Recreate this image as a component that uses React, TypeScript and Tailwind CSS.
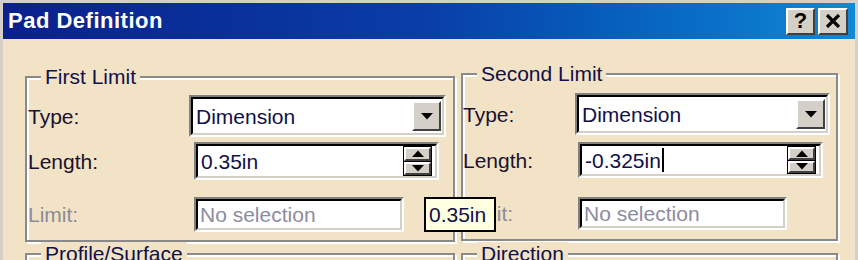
import type { ReactNode } from 'react'

// classic 3D borders, drawn at 2x
const sunkenOuter = 'border-2 border-t-[#808080] border-l-[#808080] border-b-white border-r-white'
const sunkenInner = 'border-2 border-t-black border-l-black border-b-[#d4d0c8] border-r-[#d4d0c8] bg-white'
const raised = 'border-2 border-t-white border-l-white border-b-[#404040] border-r-[#404040] bg-[#d4d0c8]'

function Down() {
  return (
    <svg width="12" height="7" viewBox="0 0 12 7">
      <path d="M0 0h12L6 6.5z" fill="black" />
    </svg>
  )
}

function Up() {
  return (
    <svg width="12" height="7" viewBox="0 0 12 7">
      <path d="M6 0.5L12 7H0z" fill="black" />
    </svg>
  )
}

function Combo({ value, className }: { value: string; className: string }) {
  return (
    <div className={`${sunkenOuter} ${className}`}>
      <div className={`${sunkenInner} flex h-full items-center pl-[3px] pr-[1px]`}>
        <span className="flex-1 text-[#10104a]">{value}</span>
        <div className={`${raised} flex h-[30px] w-[29px] items-center justify-center`}>
          <Down />
        </div>
      </div>
    </div>
  )
}

function Spinner({ value, className, caret }: { value: string; className: string; caret?: boolean }) {
  return (
    <div className={`${sunkenOuter} ${className}`}>
      <div className={`${sunkenInner} flex h-full items-center pl-[3px] pr-[3px]`}>
        <span className="flex flex-1 items-center text-[#10104a]">
          {value}
          {caret && <span className="ml-[1px] inline-block h-[24px] w-[2px] bg-black" />}
        </span>
        <div className="flex h-full w-[29px] flex-col border border-black bg-black">
          <div className={`${raised} flex flex-1 items-center justify-center`}>
            <Up />
          </div>
          <div className={`${raised} mt-[1px] flex flex-1 items-center justify-center`}>
            <Down />
          </div>
        </div>
      </div>
    </div>
  )
}

function Disabled({ className }: { className: string }) {
  return (
    <div className={`${sunkenOuter} ${className}`}>
      <div className={`${sunkenInner} flex h-full items-center pl-[2px] text-[#8c8ca0]`}>No selection</div>
    </div>
  )
}

function Group({ title, className = '', children }: { title: string; className?: string; children?: ReactNode }) {
  return (
    <fieldset
      className={`min-w-0 border-2 border-[#8a8a8a] shadow-[inset_2px_2px_0_#fff,2px_2px_0_#fff] ${className}`}
    >
      <legend className="ml-[14px] bg-[#f2e3c6] px-[4px] leading-[24px] text-[#10104a]">{title}</legend>
      {children}
    </fieldset>
  )
}

export default function App() {
  return (
    <div className="relative flex h-[260px] w-[858px] flex-col overflow-hidden bg-[#d4d0c8] pl-[3px] pr-[3px] pt-[3px] font-['Liberation_Sans',Arial,sans-serif] text-[21px] leading-none">
      {/* Title bar */}
      <div className="flex h-[36px] shrink-0 items-center justify-between bg-gradient-to-r from-[#0a208c] via-[#0a3ea8] to-[#1288d6] pl-[5px] pr-[7px]">
        <span className="text-[22px] font-bold tracking-[0.5px] text-white">Pad Definition</span>
        <div className="flex gap-[3px]">
          <div className={`${raised} flex h-[27px] w-[29px] items-center justify-center text-[22px] font-bold text-black`}>?</div>
          <div className={`${raised} flex h-[27px] w-[30px] items-center justify-center`}>
            <svg width="16" height="14" viewBox="0 0 16 14">
              <path d="M2 1L14 13M14 1L2 13" stroke="black" strokeWidth="3.2" />
            </svg>
          </div>
        </div>
      </div>

      {/* Body */}
      <div className="flex flex-1 gap-[6px] bg-[#f2e3c6] pl-[22px]">
        <div className="flex w-[430px] flex-col">
          <Group title="First Limit" className="mt-[26px] h-[177px] shrink-0">
            <div className="mt-[6px] flex h-[42px] items-center">
              <span className="w-[162px] pl-[1px] text-[#1a1030]">Type:</span>
              <Combo value="Dimension" className="h-[42px] w-[257px]" />
            </div>
            <div className="mt-[5px] flex h-[38px] items-center">
              <span className="w-[167px] pl-[1px] text-[#1a1030]">Length:</span>
              <Spinner value="0.35in" className="h-[38px] w-[245px]" />
            </div>
            <div className="mt-[17px] flex h-[35px] items-center">
              <span className="w-[167px] pl-[1px] text-[#8c8c98]">Limit:</span>
              <Disabled className="h-[35px] w-[210px]" />
            </div>
          </Group>
          <Group title="Profile/Surface" className="h-[60px] shrink-0" />
        </div>

        <div className="flex w-[377px] flex-col">
          <Group title="Second Limit" className="mt-[23px] h-[179px] shrink-0">
            <div className="mt-[7px] flex h-[42px] items-center">
              <span className="w-[112px] text-[#1a1030]">Type:</span>
              <Combo value="Dimension" className="h-[42px] w-[255px]" />
            </div>
            <div className="mt-[7px] flex h-[36px] items-center">
              <span className="w-[115px] text-[#1a1030]">Length:</span>
              <Spinner value="-0.325in" caret className="h-[36px] w-[245px]" />
            </div>
            <div className="mt-[19px] flex h-[33px] items-center">
              <span className="w-[115px] text-[#8c8c98]">Limit:</span>
              <Disabled className="h-[33px] w-[209px]" />
            </div>
          </Group>
          <Group title="Direction" className="mt-[1px] h-[60px] shrink-0" />
        </div>
      </div>

      {/* Tooltip */}
      <div className="absolute left-[424px] top-[197px] flex h-[35px] w-[72px] items-center border-2 border-black bg-[#ffffe1] pl-[3px] text-[#10104a]">
        0.35in
      </div>
    </div>
  )
}
